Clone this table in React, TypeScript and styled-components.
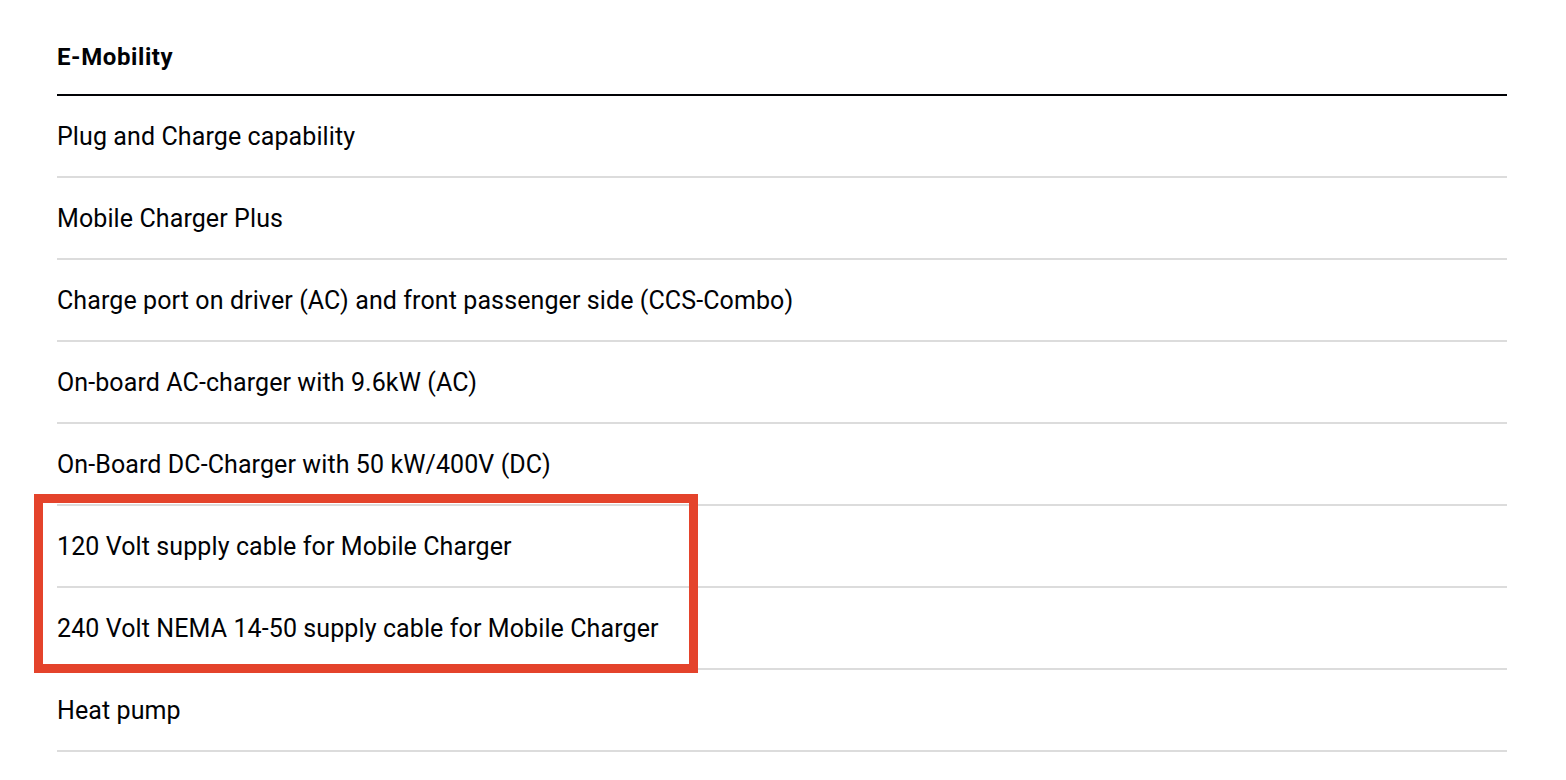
import React from "react";
import styled, { createGlobalStyle } from "styled-components";

const Global = createGlobalStyle`
  html, body { margin: 0; padding: 0; background: #fff; }
  body { font-family: Roboto, "Liberation Sans", Arial, sans-serif; color: #010205; }
`;

const Page = styled.div`
  padding: 0 59px 0 57px;
`;

const Header = styled.h2`
  margin: 0;
  height: 96px;
  display: flex;
  align-items: center;
  padding-top: 20px;
  box-sizing: border-box;
  font-size: 24px;
  font-weight: 700;
  letter-spacing: 0.6px;
  border-bottom: 2px solid #010205;
`;

const List = styled.ul`
  list-style: none;
  margin: 0;
  padding: 0;
`;

const Row = styled.li`
  height: 80px;
  display: flex;
  align-items: center;
  font-size: 25px;
  font-weight: 400;
  letter-spacing: 0.1px;
  border-bottom: 2px solid #dcdcdc;
`;

const Highlight = styled.div`
  position: relative;
  &::after {
    content: "";
    position: absolute;
    left: -23px;
    top: -12px;
    width: 664px;
    bottom: -3px;
    border: 9px solid #e4432b;
    box-sizing: border-box;
    pointer-events: none;
  }
`;

const before = [
  "Plug and Charge capability",
  "Mobile Charger Plus",
  "Charge port on driver (AC) and front passenger side (CCS-Combo)",
  "On-board AC-charger with 9.6kW (AC)",
  "On-Board DC-Charger with 50 kW/400V (DC)",
];
const marked = [
  "120 Volt supply cable for Mobile Charger",
  "240 Volt NEMA 14-50 supply cable for Mobile Charger",
];
const after = ["Heat pump"];

export default function App() {
  return (
    <Page>
      <Global />
      <Header>E-Mobility</Header>
      <List>
        {before.map((t) => (
          <Row key={t}>{t}</Row>
        ))}
      </List>
      <Highlight>
        <List>
          {marked.map((t) => (
            <Row key={t}>{t}</Row>
          ))}
        </List>
      </Highlight>
      <List>
        {after.map((t) => (
          <Row key={t}>{t}</Row>
        ))}
      </List>
    </Page>
  );
}
